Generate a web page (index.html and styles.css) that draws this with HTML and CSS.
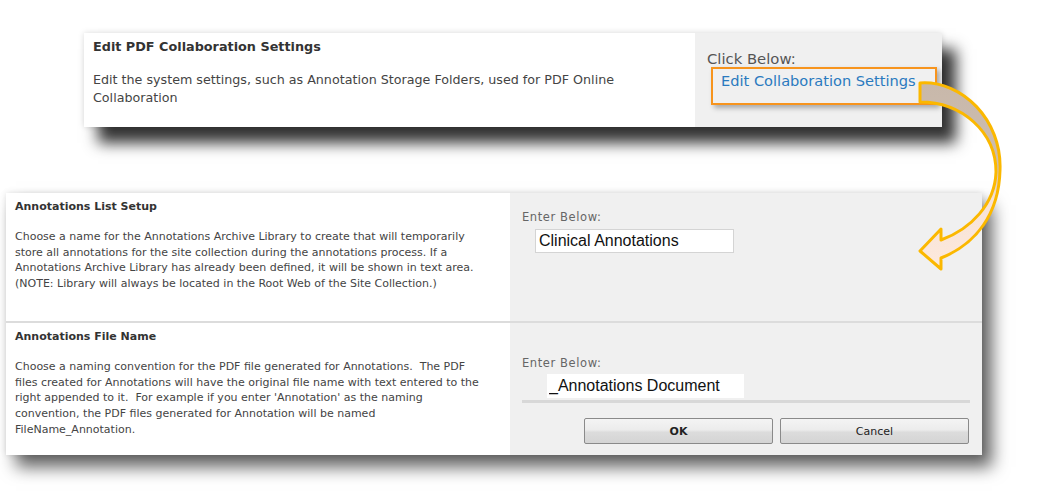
FILE: index.html
```html
<!DOCTYPE html>
<html lang="en">
<head>
  <meta charset="UTF-8">
  <title>PDF Collaboration Settings</title>
  <link rel="stylesheet" href="styles.css">
</head>
<body>
  <div class="canvas">

    <div class="top-panel">
      <div class="top-main">
        <h2 class="top-title">Edit PDF Collaboration Settings</h2>
        <p class="top-desc">Edit the system settings, such as Annotation Storage Folders, used for PDF Online<br>Collaboration</p>
      </div>
      <div class="top-side">
        <div class="click-label">Click Below:</div>
        <a class="edit-link" href="#">Edit Collaboration Settings</a>
      </div>
    </div>

    <div class="settings">
      <div class="row row-list">
        <div class="cell-info">
          <h3 class="section-title">Annotations List Setup</h3>
          <p class="section-desc">Choose a name for the Annotations Archive Library to create that will temporarily<br>store all annotations for the site collection during the annotations process. If a<br>Annotations Archive Library has already been defined, it will be shown in text area.<br>(NOTE: Library will always be located in the Root Web of the Site Collection.)</p>
        </div>
        <div class="cell-input">
          <div class="enter-label">Enter Below:</div>
          <input class="text-field field-list" type="text" value="Clinical Annotations">
        </div>
      </div>

      <div class="row row-file">
        <div class="cell-info">
          <h3 class="section-title">Annotations File Name</h3>
          <p class="section-desc">Choose a naming convention for the PDF file generated for Annotations.&nbsp; The PDF<br>files created for Annotations will have the original file name with text entered to the<br>right appended to it.&nbsp; For example if you enter 'Annotation' as the naming<br>convention, the PDF files generated for Annotation will be named<br>FileName_Annotation.</p>
        </div>
        <div class="cell-input">
          <div class="enter-label">Enter Below:</div>
          <input class="text-field field-file" type="text" value="_Annotations Document">
          <div class="divider"></div>
          <div class="buttons">
            <button class="btn btn-ok">OK</button>
            <button class="btn">Cancel</button>
          </div>
        </div>
      </div>
    </div>

    <!-- curved callout arrow drawn over the two screenshots -->
    <svg class="arrow" width="1038" height="500" viewBox="0 0 1038 500">
      <defs>
        <linearGradient id="arrowFill" x1="0" y1="0" x2="0" y2="1">
          <stop offset="0" stop-color="#c8b8aa"/>
          <stop offset="0.45" stop-color="#cdbdb1"/>
          <stop offset="0.62" stop-color="#f6e2d6"/>
          <stop offset="1" stop-color="#fde9dd"/>
        </linearGradient>
      </defs>
      <path d="M920 83 C962 80 1002 120 1000 170 C999 214 976 244 941 258 L941 269 L920 251 L941 229 L941 240 C971 229 995 204 996 172 C996 132 962 102 920 102 Z"
            fill="url(#arrowFill)" stroke="#fbb800" stroke-width="3" stroke-linejoin="round"/>
    </svg>
  </div>
</body>
</html>
```

FILE: styles.css
```css
body {
  margin: 0;
  background: #fff;
  font-family: "DejaVu Sans", Verdana, sans-serif;
}
.canvas {
  position: relative;
  width: 1038px;
  height: 500px;
  padding-top: 33px;
  box-sizing: border-box;
  overflow: hidden;
}

/* top screenshot */
.top-panel {
  margin-left: 84px;
  width: 858px;
  height: 94px;
  display: grid;
  grid-template-columns: 611px 1fr;
  box-shadow: 14px 16px 14px rgba(0,0,0,0.8), 0 0 6px rgba(0,0,0,0.15);
}
.top-main {
  background: #fff;
  padding: 5px 9px 0;
}
.top-title {
  margin: 0;
  font-size: 12.8px;
  line-height: 18px;
  font-weight: bold;
  color: #333;
}
.top-desc {
  margin: 15px 0 0;
  font-size: 12.7px;
  line-height: 18px;
  color: #444;
}
.top-side {
  background: #f0f0f0;
  padding: 17px 0 0 12px;
}
.click-label {
  font-size: 14.8px;
  line-height: 17px;
  color: #555;
}
.edit-link {
  display: inline-block;
  margin: 0 0 0 4px;
  padding: 3px 19px 13px 8px;
  border: 2px solid #f7941d;
  box-shadow: 3px 3px 5px rgba(0,0,0,0.3);
  font-size: 14.6px;
  line-height: 18px;
  color: #2a7abf;
  text-decoration: none;
}

/* bottom screenshot */
.settings {
  margin: 66px 0 0 6px;
  width: 976px;
  box-shadow: 10px 12px 16px rgba(0,0,0,0.62), 0 0 6px rgba(0,0,0,0.12);
}
.row {
  display: grid;
  grid-template-columns: 504px 1fr;
}
.row-list {
  height: 128px;
}
.row-file {
  height: 132px;
  border-top: 2px solid #dcdcdc;
}
.cell-info {
  background: #fff;
  padding: 7px 9px 0;
}
.section-title {
  margin: 0;
  font-size: 11px;
  line-height: 14px;
  font-weight: bold;
  color: #333;
}
.section-desc {
  margin: 15px 0 0;
  font-size: 11px;
  line-height: 15.7px;
  color: #444;
}
.cell-input {
  background: #f0f0f0;
  padding: 18px 12px 0;
}
.row-file .cell-input {
  padding-top: 34px;
}
.enter-label {
  font-size: 11.5px;
  line-height: 13px;
  letter-spacing: 0.6px;
  color: #666;
}
.text-field {
  display: block;
  box-sizing: border-box;
  height: 24px;
  padding: 0 3px;
  background: #fff;
  font-family: "Liberation Sans", Arial, sans-serif;
  font-size: 16px;
  color: #111;
}
.field-list {
  margin: 5px 0 0 13px;
  width: 199px;
  border: 1px solid #d4d4d4;
}
.field-file {
  margin: 4px 0 0 25px;
  width: 197px;
  border: none;
  padding-left: 2px;
}
.divider {
  margin: 2px 0 0;
  width: 448px;
  height: 3px;
  background: #d8d8d8;
}
.buttons {
  display: flex;
  gap: 7px;
  margin: 15px 0 0 62px;
}
.btn {
  width: 189px;
  height: 26px;
  border: 1px solid #8a8a8a;
  border-radius: 2px;
  background: linear-gradient(#f4f4f4 0%, #ececec 45%, #dcdcdc 55%, #d4d4d4 100%);
  font-family: "DejaVu Sans", sans-serif;
  font-size: 11px;
  color: #222;
}
.btn-ok {
  font-weight: bold;
}

.arrow {
  position: absolute;
  top: 0;
  left: 0;
  pointer-events: none;
}
```
